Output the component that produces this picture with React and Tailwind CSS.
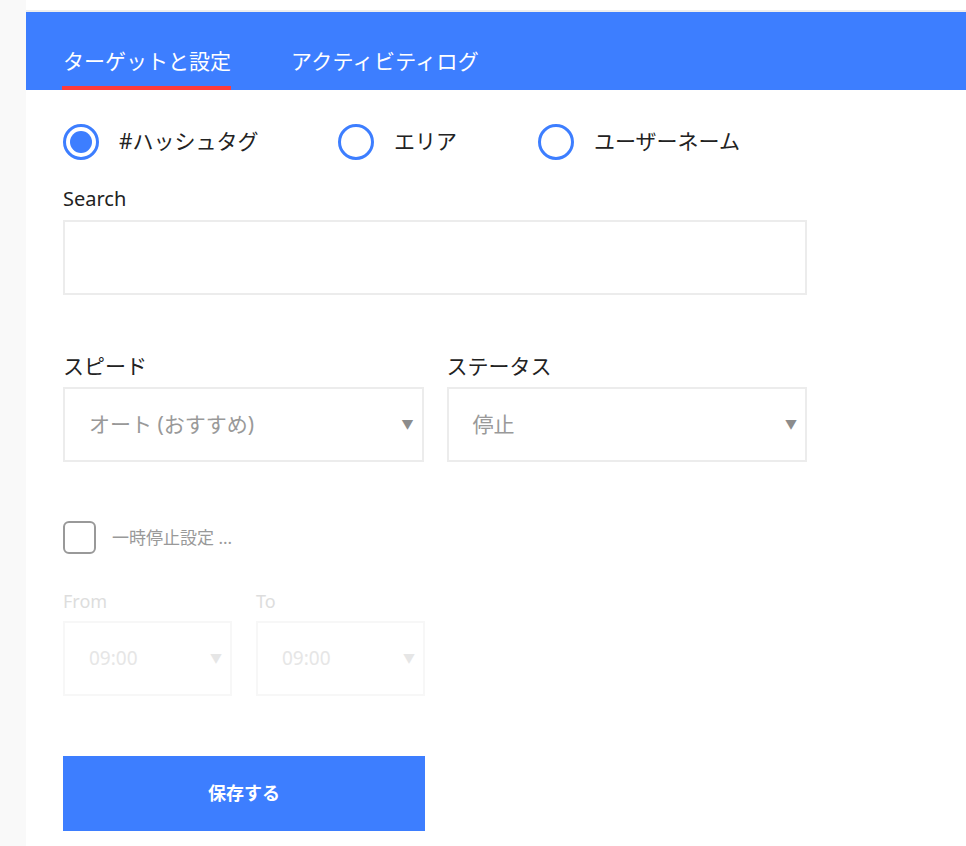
import { useState } from "react";

const FONT = { fontFamily: '"Noto Sans", "Noto Sans CJK JP", sans-serif' };

function Radio({ checked, label, onClick }) {
  return (
    <button onClick={onClick} className="flex items-center gap-[20px]">
      <span className="w-[36px] h-[36px] rounded-full border-[3px] border-[#3d7eff] flex items-center justify-center">
        {checked && <span className="w-[22px] h-[22px] rounded-full bg-[#3d7eff]" />}
      </span>
      <span className="text-[21px] text-[#222]">{label}</span>
    </button>
  );
}

function Select({ value, disabled, className }) {
  return (
    <div
      className={`relative h-[75px] flex items-center pl-[24px] border-2 ${
        disabled ? "border-[#f7f7f7] text-[#e6e6e6] text-[19px]" : "border-[#ececec] text-[#999] text-[21px]"
      } ${className}`}
    >
      <span>{value}</span>
      <span
        className={`absolute right-[8px] top-1/2 -translate-y-1/2 text-[12px] ${
          disabled ? "text-[#e6e6e6]" : "text-[#8c8c8c]"
        }`}
      >
        ▼
      </span>
    </div>
  );
}

export default function App() {
  const [mode, setMode] = useState("hashtag");
  const [pause, setPause] = useState(false);

  return (
    <div className="flex min-h-[846px] bg-white" style={FONT}>
      {/* left strip */}
      <div className="w-[26px] shrink-0 bg-[#f9f9f9]" />

      <div className="flex-1 pt-[10px]">
        <div className="border-t-2 border-[#eeeeee]" />

        {/* Tabs */}
        <div className="h-[78px] bg-[#3d7eff] flex items-end px-[37px] gap-[60px]">
          <div className="text-white text-[21px] leading-none pb-[18px] relative">
            ターゲットと設定
            <span className="absolute left-[-1px] right-0 bottom-0 h-[4px] bg-[#ff3b3b]" />
          </div>
          <div className="text-white text-[21px] tracking-[0.3px] leading-none pb-[18px]">アクティビティログ</div>
        </div>

        <div className="pl-[37px] w-[781px]">
          {/* Radios */}
          <div className="flex items-center pt-[34px]">
            <div className="w-[275px]">
              <Radio checked={mode === "hashtag"} label="#ハッシュタグ" onClick={() => setMode("hashtag")} />
            </div>
            <div className="w-[200px]">
              <Radio checked={mode === "area"} label="エリア" onClick={() => setMode("area")} />
            </div>
            <Radio checked={mode === "user"} label="ユーザーネーム" onClick={() => setMode("user")} />
          </div>

          {/* Search */}
          <div className="mt-[26px] text-[20px] text-[#222] leading-[26px]">Search</div>
          <input className="mt-[8px] w-full h-[75px] border-2 border-[#ececec] outline-none px-4" />

          {/* Speed / Status */}
          <div className="mt-[57px] grid grid-cols-2 gap-[23px]">
            <div>
              <div className="text-[21px] text-[#222] leading-[28px]">スピード</div>
              <Select value="オート (おすすめ)" className="mt-[7px]" />
            </div>
            <div>
              <div className="text-[21px] text-[#222] leading-[28px]">ステータス</div>
              <Select value="停止" className="mt-[7px]" />
            </div>
          </div>

          {/* Pause */}
          <button onClick={() => setPause(!pause)} className="mt-[59px] flex items-center gap-[16px]">
            <span className="w-[33px] h-[33px] rounded-[6px] border-2 border-[#999] flex items-center justify-center text-[#3d7eff]">
              {pause && "✓"}
            </span>
            <span className="text-[17px] text-[#999]">一時停止設定 ...</span>
          </button>

          <div className="mt-[34px] flex gap-[24px]">
            <div className="w-[169px]">
              <div className="text-[18px] text-[#dddddd] leading-[26px]">From</div>
              <Select value="09:00" disabled className="mt-[7px]" />
            </div>
            <div className="w-[169px]">
              <div className="text-[18px] text-[#dddddd] leading-[26px]">To</div>
              <Select value="09:00" disabled className="mt-[7px]" />
            </div>
          </div>

          <button className="mt-[60px] w-[362px] h-[75px] bg-[#3d7eff] text-white text-[18px] font-bold">
            保存する
          </button>
        </div>
      </div>
    </div>
  );
}
